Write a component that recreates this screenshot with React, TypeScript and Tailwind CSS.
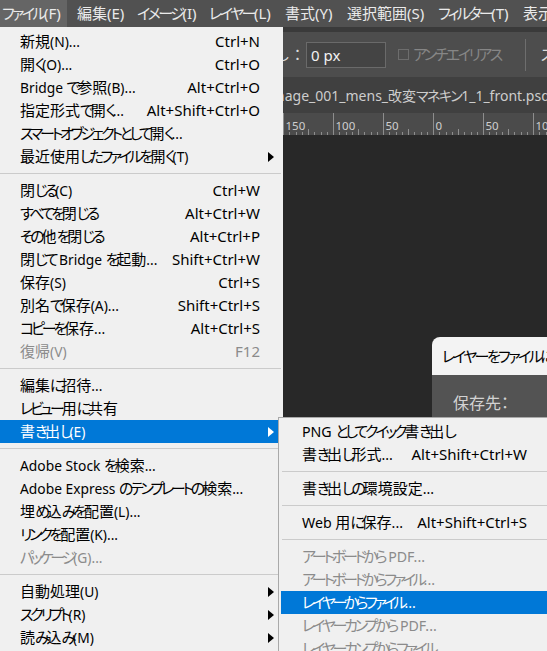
import React from 'react';

type Entry =
  | { kind: 'sep' }
  | { kind: 'item'; t: string; s?: string; arrow?: boolean; disabled?: boolean; active?: boolean };

const SEP: Entry = { kind: 'sep' };
function it(t: string, o: { s?: string; arrow?: boolean; disabled?: boolean; active?: boolean } = {}): Entry {
  return { kind: 'item', t, ...o };
}

const mainItems: Entry[] = [
  it('新規(N)...', { s: 'Ctrl+N' }),
  it('開く(O)...', { s: 'Ctrl+O' }),
  it('Bridge で参照(B)...', { s: 'Alt+Ctrl+O' }),
  it('指定形式で開く...', { s: 'Alt+Shift+Ctrl+O' }),
  it('スマートオブジェクトとして開く...'),
  it('最近使用したファイルを開く(T)', { arrow: true }),
  SEP,
  it('閉じる(C)', { s: 'Ctrl+W' }),
  it('すべてを閉じる', { s: 'Alt+Ctrl+W' }),
  it('その他を閉じる', { s: 'Alt+Ctrl+P' }),
  it('閉じて Bridge を起動...', { s: 'Shift+Ctrl+W' }),
  it('保存(S)', { s: 'Ctrl+S' }),
  it('別名で保存(A)...', { s: 'Shift+Ctrl+S' }),
  it('コピーを保存...', { s: 'Alt+Ctrl+S' }),
  it('復帰(V)', { s: 'F12', disabled: true }),
  SEP,
  it('編集に招待...'),
  it('レビュー用に共有'),
  it('書き出し(E)', { arrow: true, active: true }),
  SEP,
  it('Adobe Stock を検索...'),
  it('Adobe Express のテンプレートの検索...'),
  it('埋め込みを配置(L)...'),
  it('リンクを配置(K)...'),
  it('パッケージ(G)...', { disabled: true }),
  SEP,
  it('自動処理(U)', { arrow: true }),
  it('スクリプト(R)', { arrow: true }),
  it('読み込み(M)', { arrow: true }),
];

const subItems: Entry[] = [
  it('PNG としてクイック書き出し'),
  it('書き出し形式...', { s: 'Alt+Shift+Ctrl+W' }),
  SEP,
  it('書き出しの環境設定...'),
  SEP,
  it('Web 用に保存...', { s: 'Alt+Shift+Ctrl+S' }),
  SEP,
  it('アートボードから PDF...', { disabled: true }),
  it('アートボードからファイル...', { disabled: true }),
  it('レイヤーからファイル...', { active: true }),
  it('レイヤーカンプから PDF...', { disabled: true }),
  it('レイヤーカンプからファイル...', { disabled: true }),
];

const FONT = "[font-family:'Noto_Sans','Noto_Sans_CJK_JP',sans-serif]";

type Track = 'tight' | 'mid' | 'loose';
const TRACK: Record<Track, string> = {
  tight: 'tracking-[-3.2px]',
  mid: 'tracking-[-2.5px]',
  loose: 'tracking-[-1.5px]',
};

const KANA = /[\u3040-\u30ff]/;
const IDEO = /[\u3000-\u303f\u3400-\u9fff\uff00-\uffef]/;

function JP({ text, track = 'tight', latin = '' }: { text: string; track?: Track; latin?: string }) {
  const parts = text.match(/[\u3040-\u30ff]+|[\u3000-\u303f\u3400-\u9fff\uff00-\uffef]+|[^\u3000-\u30ff\u3400-\u9fff\uff00-\uffef]+/g) || [];
  return (
    <>
      {parts.map((p, i) =>
        KANA.test(p) ? (
          <span key={i} className={TRACK[track]}>
            {p}
          </span>
        ) : IDEO.test(p) ? (
          <span key={i}>{p}</span>
        ) : (
          <span key={i} className={latin}>
            {p}
          </span>
        )
      )}
    </>
  );
}

function Arrow({ white }: { white?: boolean }) {
  return (
    <svg width="6" height="10" viewBox="0 0 6 10" className="block">
      <path d="M0 0 L6 5 L0 10 Z" fill={white ? '#ffffff' : '#000000'} />
    </svg>
  );
}

function MainMenu() {
  return (
    <div className={`absolute left-0 top-[27px] z-10 w-[283px] h-[640px] bg-[#f0f0f0] pt-[3px] pr-[2px] text-[15px] [font-feature-settings:'palt'] ${FONT}`}>
      {mainItems.map((e, i) =>
        e.kind === 'sep' ? (
          <div key={i} className="pt-[5px] pb-[5px]">
            <div className="h-px bg-[#cbcbcb]" />
          </div>
        ) : (
          <div
            key={i}
            className={`h-[23px] flex items-center pl-[20px] pr-[7px] leading-[23px] whitespace-nowrap ${
              e.active ? 'bg-[#0078d7] text-white' : e.disabled ? 'text-[#8b8b8b]' : 'text-black'
            }`}
          >
            <span className="shrink-0">
              <JP text={e.t} latin="text-[13.8px]" />
            </span>
            {e.s && <span className="ml-auto mr-[14px] shrink-0">{e.s}</span>}
            {e.arrow && (
              <span className="ml-auto shrink-0">
                <Arrow white={e.active} />
              </span>
            )}
          </div>
        )
      )}
    </div>
  );
}

function SubMenu() {
  return (
    <div className={`absolute left-[278px] top-[417px] z-20 w-[276px] h-[260px] bg-[#f0f0f0] border-l border-t border-[#a9a9a9] pt-[2px] pl-[2px] text-[15px] [font-feature-settings:'palt'] ${FONT}`}>
      {subItems.map((e, i) =>
        e.kind === 'sep' ? (
          <div key={i} className="pt-[5px] pb-[5px] pl-[1px]">
            <div className="h-px bg-[#cbcbcb]" />
          </div>
        ) : (
          <div
            key={i}
            className={`h-[23px] flex items-center pl-[21px] pr-[27px] leading-[23px] whitespace-nowrap ${
              e.active ? 'bg-[#0078d7] text-white' : e.disabled ? 'text-[#8b8b8b]' : 'text-black'
            }`}
          >
            <span className="shrink-0">
              <JP text={e.t} latin="text-[14.2px]" />
            </span>
            {e.s && <span className="ml-auto shrink-0">{e.s}</span>}
          </div>
        )
      )}
    </div>
  );
}

function MenuBar() {
  return (
    <div className={`h-[27px] shrink-0 bg-[#515151] flex items-stretch text-[15px] text-[#eaeaea] leading-[27px] whitespace-nowrap [font-feature-settings:'palt'] ${FONT}`}>
      <div className="w-[67px] shrink-0 pl-[2px] bg-[#656565]">
        <JP text="ファイル(F)" track="mid" />
      </div>
      <div className="w-[62px] shrink-0 pl-[10px]">
        <JP text="編集(E)" track="mid" />
      </div>
      <div className="w-[72px] shrink-0 pl-[8px]">
        <JP text="イメージ(I)" track="mid" />
      </div>
      <div className="w-[76px] shrink-0 pl-[8px]">
        <JP text="レイヤー(L)" track="mid" />
      </div>
      <div className="w-[62px] shrink-0 pl-[8px]">
        <JP text="書式(Y)" track="mid" />
      </div>
      <div className="w-[91px] shrink-0 pl-[8px]">
        <JP text="選択範囲(S)" track="mid" />
      </div>
      <div className="w-[85px] shrink-0 pl-[8px]">
        <JP text="フィルター(T)" track="mid" />
      </div>
      <div className="shrink-0 pl-[8px]">
        <JP text="表示(V)" track="mid" />
      </div>
    </div>
  );
}

function OptionsBar() {
  return (
    <div className={`h-[50px] shrink-0 bg-[#3a3a3a] pt-[5px] ${FONT}`}>
      <div className="h-[45px] bg-[#4d4d4d] flex items-center whitespace-nowrap text-[15px] overflow-hidden">
        <div className="w-[305px] shrink-0 flex justify-end text-[#dcdcdc]">ぼかし：</div>
        <div className="ml-[1px] w-[80px] h-[26px] shrink-0 border border-[#6a6a6a] bg-[#444444] pl-[4px] leading-[24px] text-[#f2f2f2]">
          0 px
        </div>
        <div className="ml-[12px] w-[11px] h-[11px] shrink-0 border border-[#6d6d6d]" />
        <div className="ml-[4px] shrink-0 text-[#868686] [font-feature-settings:'palt']">
          <JP text="アンチエイリアス" track="mid" />
        </div>
        <div className="ml-[24px] w-px h-[32px] shrink-0 bg-[#6e6e6e]" />
        <div className="ml-[15px] shrink-0 text-[#dcdcdc] [font-feature-settings:'palt']">
          <JP text="スタイル：" track="loose" />
        </div>
      </div>
    </div>
  );
}

function TabBar() {
  return (
    <div className={`h-[36px] shrink-0 bg-[#404040] flex items-center whitespace-nowrap overflow-hidden text-[14px] text-[#cdcdcd] [font-feature-settings:'palt'] ${FONT}`}>
      <div className="pl-[268px] shrink-0">
        <JP text="image_001_mens_改変マネキン1_1_front.psd @ 25% (RGB/8)" track="loose" />
      </div>
    </div>
  );
}

function Ruler() {
  const majors: number[] = [];
  for (let x = 283; x <= 547; x += 50) majors.push(x);
  const minors: number[] = [];
  for (let x = 283 - 50; x <= 547; x += 6.25) minors.push(x);
  return (
    <div className="h-[22px] shrink-0 bg-[#4b4b4b]">
      <svg width="547" height="22" className="block">
        {minors.map((x, i) => {
          const mid = i % 8 === 4;
          return (
            <line
              key={'m' + i}
              x1={Math.round(x) + 0.5}
              x2={Math.round(x) + 0.5}
              y1={mid ? 16 : 19}
              y2={22}
              stroke="#8d8d8d"
              strokeWidth={1}
            />
          );
        })}
        {majors.map((x) => (
          <line key={'M' + x} x1={x + 0.5} x2={x + 0.5} y1={0} y2={22} stroke="#8d8d8d" strokeWidth={1} />
        ))}
        {majors.map((x) => (
          <text
            key={'t' + x}
            x={x + 2.5}
            y={17}
            fontSize="11.5"
            fill="#cfcfcf"
            fontFamily="'Noto Sans', sans-serif"
          >
            {Math.abs(x - 433)}
          </text>
        ))}
      </svg>
    </div>
  );
}

function Dialog() {
  return (
    <div className={`absolute left-[432px] top-[337px] w-[220px] h-[320px] rounded-tl-[8px] overflow-hidden ${FONT} [font-feature-settings:'palt']`}>
      <div className="h-[38px] bg-[#f3f3f3] pl-[10px] leading-[38px] text-[15px] text-black whitespace-nowrap">
        <JP text="レイヤーをファイルに書き出し" track="mid" />
      </div>
      <div className="h-full bg-[#535353] pl-[21px] pt-[16px] text-[16px] leading-[24px] text-[#d2d2d2]">
        保存先：
      </div>
    </div>
  );
}

export default function App() {
  return (
    <div className="relative w-[547px] h-[651px] overflow-hidden bg-[#282828] flex flex-col">
      <MenuBar />
      <OptionsBar />
      <TabBar />
      <Ruler />
      <div className="flex-1 bg-[#282828]" />
      <Dialog />
      <MainMenu />
      <SubMenu />
    </div>
  );
}
